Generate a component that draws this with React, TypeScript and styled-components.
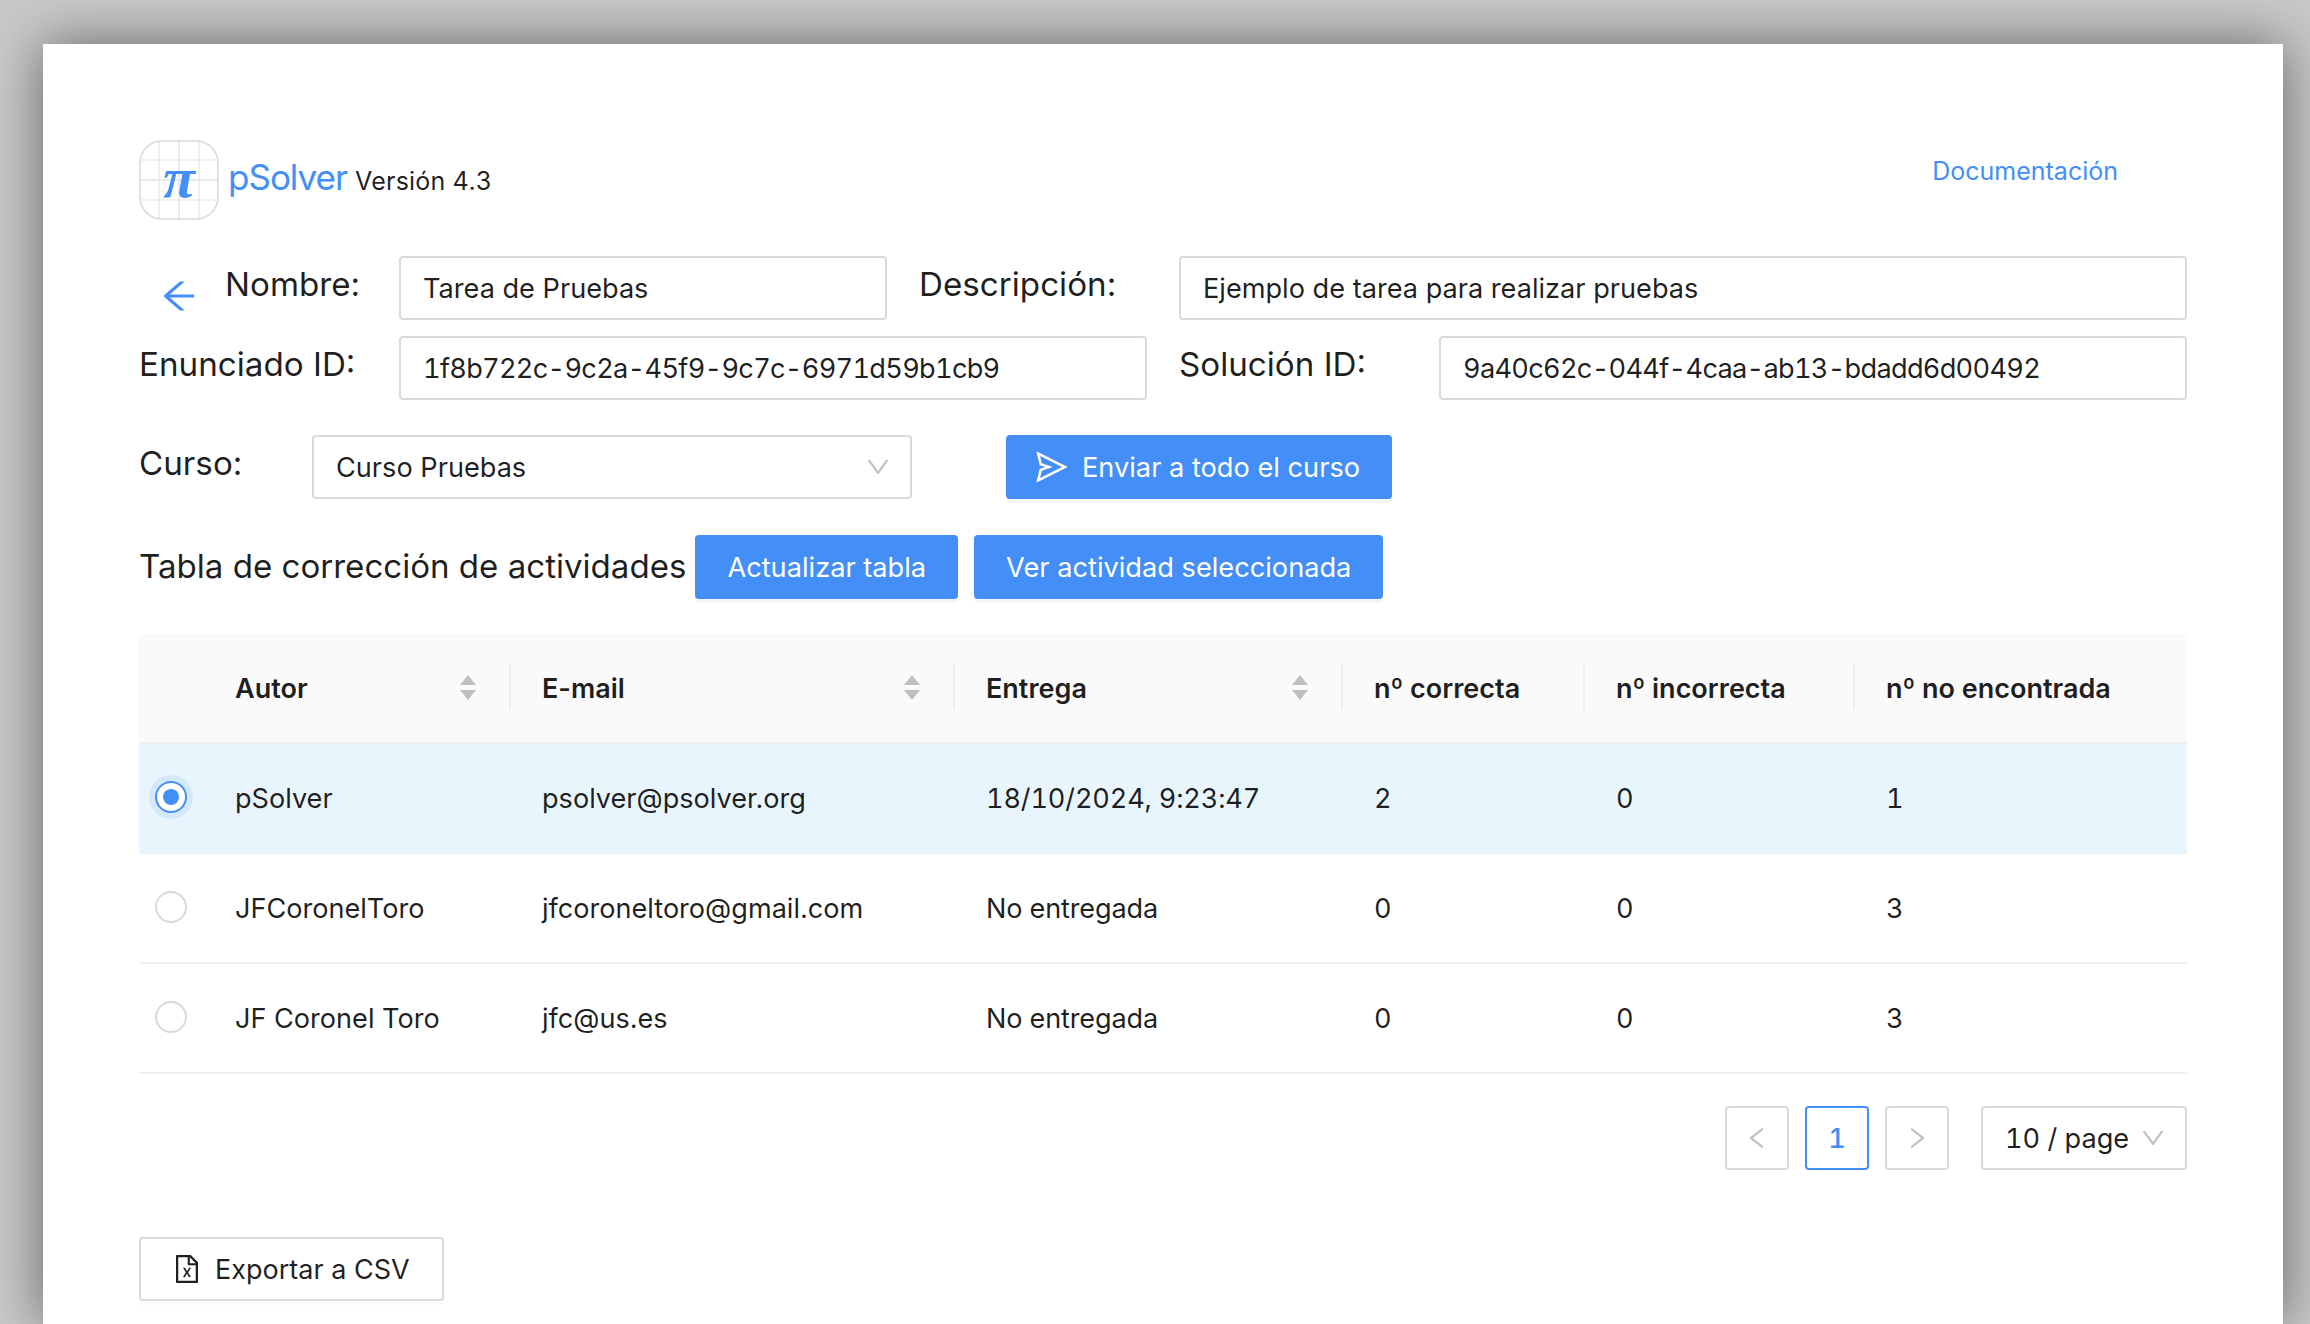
import React from 'react'
import styled, { createGlobalStyle } from 'styled-components'
import {
	AiOutlineArrowLeft,
	AiOutlineSend,
	AiOutlineDown,
	AiOutlineLeft,
	AiOutlineRight,
	AiOutlineFileExcel,
} from 'react-icons/ai'

const BLUE = '#448ef7'
const BORDER = '#d9d9d9'
const TEXT = 'rgba(0, 0, 0, 0.88)'
const FONT = 'Inter, "Liberation Sans", sans-serif'

const GlobalStyle = createGlobalStyle`
	html, body {
		margin: 0;
		height: 100%;
		overflow: hidden;
		background: #c9c9c9;
	}
	* {
		box-sizing: border-box;
	}
	body {
		font-family: ${FONT};
		color: ${TEXT};
	}
`

const Page = styled.div`
	height: 1324px;
	padding: 44px 27px 0 43px;
	background: #c9c9c9;
`

const Window = styled.main`
	height: 1280px;
	background: #fff;
	padding: 96px 96px 0 96px;
	box-shadow: 0 0 52px rgba(0, 0, 0, 0.5);
	display: flex;
	flex-direction: column;
`

const Header = styled.header`
	display: flex;
	align-items: center;
	height: 80px;
	margin-bottom: 36px;
`

const LogoMark = styled.svg`
	width: 80px;
	height: 80px;
	flex: none;
`

const Title = styled.div`
	display: flex;
	align-items: baseline;
	margin-left: 9px;
	margin-top: -5px;
`

const Brand = styled.span`
	font-size: 35px;
	line-height: 1;
	color: ${BLUE};
	letter-spacing: -1px;
`

const Version = styled.span`
	margin-left: 8px;
	font-size: 25px;
	letter-spacing: 0.2px;
	font-feature-settings: "tnum";
`

const DocLink = styled.a`
	margin-left: auto;
	margin-right: 69px;
	margin-top: -18px;
	font-size: 25px;
	color: ${BLUE};
`

const FieldRow = styled.div<{ $gap?: number }>`
	display: flex;
	align-items: stretch;
	margin-bottom: ${p => p.$gap ?? 16}px;
`

const LabelSlot = styled.div<{ $width: number; $inset?: number }>`
	display: flex;
	align-items: center;
	width: ${p => p.$width}px;
	padding-left: ${p => p.$inset ?? 0}px;
	flex: none;
`

const BackArrow = styled(AiOutlineArrowLeft)`
	width: 42px;
	height: 42px;
	margin-left: 19px;
	margin-right: 25px;
	margin-top: 16px;
	color: ${BLUE};
`

const Label = styled.label`
	font-size: 33.2px;
	line-height: 1;
	margin-top: -6px;
`

const Field = styled.input<{ $width?: number; $code?: boolean }>`
	height: 64px;
	${p => (p.$width ? `width: ${p.$width}px; flex: none;` : 'flex: 1; min-width: 0;')}
	border: 2px solid ${BORDER};
	border-radius: 4px;
	padding: 0 22px;
	font: 27.15px ${FONT};
	font-feature-settings: ${p => (p.$code ? '"tnum"' : 'normal')};
	letter-spacing: ${p => (p.$code ? '-0.7px' : '0')};
	color: ${TEXT};
	outline: none;
`

const SelectBox = styled.div<{ $width: number }>`
	display: flex;
	align-items: center;
	justify-content: space-between;
	width: ${p => p.$width}px;
	height: 64px;
	flex: none;
	border: 2px solid ${BORDER};
	border-radius: 4px;
	padding: 0 18px 0 22px;
	font-size: 27.15px;
`

const Chevron = styled(AiOutlineDown)`
	width: 28px;
	height: 28px;
	color: #bfbfbf;
`

const PrimaryButton = styled.button<{ $left?: number }>`
	display: inline-flex;
	align-items: center;
	justify-content: center;
	gap: 16px;
	height: 64px;
	flex: none;
	margin-left: ${p => p.$left ?? 0}px;
	padding: 0 32px;
	border: none;
	border-radius: 4px;
	background: ${BLUE};
	color: #fff;
	font: 27.2px ${FONT};
	box-shadow: 0 4px 0 rgba(0, 0, 0, 0.04);

	svg {
		width: 36px;
		height: 36px;
		margin: 0 -4px;
	}
`

const SectionTitle = styled.h2`
	margin: -3px 0 0;
	align-self: center;
	font-size: 33.1px;
	font-weight: 400;
`

const Table = styled.table`
	width: 100%;
	table-layout: fixed;
	border-collapse: separate;
	border-spacing: 0;
	font-size: 27.1px;
`

const Th = styled.th<{ $sep?: boolean }>`
	position: relative;
	height: 110px;
	padding: 0 32px;
	text-align: left;
	font-weight: 600;
	font-size: 27px;
	background: #fafafa;
	border-bottom: 2px solid #f0f0f0;

	&::before {
		content: ${p => (p.$sep ? "''" : 'none')};
		position: absolute;
		left: -1px;
		top: 31px;
		height: 45px;
		width: 2px;
		background: #eeeeee;
	}
`

const SortIcons = styled.svg`
	position: absolute;
	right: 34px;
	top: 41px;
	width: 16px;
	height: 25px;
	fill: #bfbfbf;
`

const Tr = styled.tr<{ $selected?: boolean }>`
	background: ${p => (p.$selected ? '#e8f5fd' : '#fff')};

	td {
		border-bottom: 2px solid ${p => (p.$selected ? '#e8f5fd' : '#f0f0f0')};
	}
`

const Td = styled.td<{ $nums?: boolean }>`
	height: 110px;
	padding: 0 32px;
	font-feature-settings: ${p => (p.$nums ? '"tnum"' : 'normal')};
	letter-spacing: ${p => (p.$nums ? '-0.15px' : '0')};
`

const RadioCell = styled.td`
	height: 110px;
	padding: 0 0 0 16px;
`

const Radio = styled.span<{ $checked?: boolean }>`
	display: block;
	position: relative;
	top: -1px;
	width: 32px;
	height: 32px;
	border-radius: 50%;
	background: #fff;
	border: 2px solid ${p => (p.$checked ? BLUE : BORDER)};
	box-shadow: ${p => (p.$checked ? '0 0 0 6px #d3e8fd' : 'none')};

	&::after {
		content: ${p => (p.$checked ? "''" : 'none')};
		position: absolute;
		inset: 6px;
		border-radius: 50%;
		background: ${BLUE};
	}
`

const Pagination = styled.nav`
	display: flex;
	justify-content: flex-end;
	gap: 16px;
	margin-top: 32px;
`

const PageButton = styled.button<{ $active?: boolean }>`
	display: flex;
	align-items: center;
	justify-content: center;
	width: 64px;
	height: 64px;
	padding: 0;
	background: #fff;
	border: 2px solid ${p => (p.$active ? BLUE : BORDER)};
	border-radius: 4px;
	color: ${p => (p.$active ? BLUE : '#bfbfbf')};
	font: 500 27px ${FONT};
	font-feature-settings: "tnum";

	svg {
		width: 28px;
		height: 28px;
	}
`

const PageSize = styled(SelectBox)`
	margin-left: 16px;
	padding: 0 18px 0 22px;
	font-feature-settings: "tnum";
`

const ExportButton = styled.button`
	display: inline-flex;
	align-items: center;
	gap: 15px;
	align-self: flex-start;
	height: 64px;
	margin-top: 67px;
	padding: 0 32px;
	background: #fff;
	border: 2px solid ${BORDER};
	border-radius: 4px;
	color: ${TEXT};
	font: 27px ${FONT};
	box-shadow: 0 4px 0 rgba(0, 0, 0, 0.02);

	svg {
		width: 32px;
		height: 32px;
		margin: 0 -2.5px;
	}
`

const columns = [64, 307, 444, 388, 242, 270, 333]

const rows = [
	{ autor: 'pSolver', email: 'psolver@psolver.org', entrega: '18/10/2024, 9:23:47', ok: 2, bad: 0, missing: 1 },
	{ autor: 'JFCoronelToro', email: 'jfcoroneltoro@gmail.com', entrega: 'No entregada', ok: 0, bad: 0, missing: 3 },
	{ autor: 'JF Coronel Toro', email: 'jfc@us.es', entrega: 'No entregada', ok: 0, bad: 0, missing: 3 },
]

const Sort = () => (
	<SortIcons viewBox="0 0 16 25">
		<path d="M8 0L16 10H0Z" />
		<path d="M0 15H16L8 25Z" />
	</SortIcons>
)

const Logo = () => (
	<LogoMark viewBox="0 0 80 80">
		<g stroke="#f0f0f0" strokeWidth="2">
			<path d="M20 1V79M60 1V79M1 20H79M1 60H79" />
		</g>
		<g stroke="#e4e4e4" strokeWidth="1.5">
			<path d="M40 1V79M1 40H79" />
		</g>
		<rect x="1" y="1" width="78" height="78" rx="22" fill="none" stroke="#d9d9d9" strokeWidth="1.5" />
		<text x="40" y="57" textAnchor="middle" fontFamily="'Liberation Serif', serif" fontStyle="italic" fontWeight="700" fontSize="58" fill={BLUE}>
			π
		</text>
	</LogoMark>
)

export default function App() {
	return (
		<>
			<GlobalStyle />
			<Page>
				<Window>
					<Header>
						<Logo />
						<Title>
							<Brand>pSolver</Brand>
							<Version>Versión 4.3</Version>
						</Title>
						<DocLink>Documentación</DocLink>
					</Header>

					<FieldRow>
						<LabelSlot $width={260}>
							<BackArrow />
							<Label>Nombre:</Label>
						</LabelSlot>
						<Field $width={488} readOnly value="Tarea de Pruebas" />
						<LabelSlot $width={292} $inset={32}>
							<Label>Descripción:</Label>
						</LabelSlot>
						<Field readOnly value="Ejemplo de tarea para realizar pruebas" />
					</FieldRow>

					<FieldRow $gap={35}>
						<LabelSlot $width={260}>
							<Label>Enunciado ID:</Label>
						</LabelSlot>
						<Field $width={748} $code readOnly value="1f8b722c-9c2a-45f9-9c7c-6971d59b1cb9" />
						<LabelSlot $width={292} $inset={32}>
							<Label>Solución ID:</Label>
						</LabelSlot>
						<Field $code readOnly value="9a40c62c-044f-4caa-ab13-bdadd6d00492" />
					</FieldRow>

					<FieldRow $gap={36}>
						<LabelSlot $width={173}>
							<Label>Curso:</Label>
						</LabelSlot>
						<SelectBox $width={600}>
							Curso Pruebas
							<Chevron />
						</SelectBox>
						<PrimaryButton $left={94}>
							<AiOutlineSend />
							Enviar a todo el curso
						</PrimaryButton>
					</FieldRow>

					<FieldRow $gap={35}>
						<SectionTitle>Tabla de corrección de actividades</SectionTitle>
						<PrimaryButton $left={9}>Actualizar tabla</PrimaryButton>
						<PrimaryButton $left={16}>Ver actividad seleccionada</PrimaryButton>
					</FieldRow>

					<Table>
						<colgroup>
							{columns.map((w, i) => (
								<col key={i} style={{ width: w }} />
							))}
						</colgroup>
						<thead>
							<tr>
								<Th />
								<Th>Autor<Sort /></Th>
								<Th $sep>E-mail<Sort /></Th>
								<Th $sep>Entrega<Sort /></Th>
								<Th $sep>nº correcta</Th>
								<Th $sep>nº incorrecta</Th>
								<Th $sep>nº no encontrada</Th>
							</tr>
						</thead>
						<tbody>
							{rows.map((r, i) => (
								<Tr key={r.email} $selected={i === 0}>
									<RadioCell><Radio $checked={i === 0} /></RadioCell>
									<Td>{r.autor}</Td>
									<Td>{r.email}</Td>
									<Td $nums>{r.entrega}</Td>
									<Td $nums>{r.ok}</Td>
									<Td $nums>{r.bad}</Td>
									<Td $nums>{r.missing}</Td>
								</Tr>
							))}
						</tbody>
					</Table>

					<Pagination>
						<PageButton><AiOutlineLeft /></PageButton>
						<PageButton $active>1</PageButton>
						<PageButton><AiOutlineRight /></PageButton>
						<PageSize $width={206}>
							10 / page
							<Chevron />
						</PageSize>
					</Pagination>

					<ExportButton>
						<AiOutlineFileExcel />
						Exportar a CSV
					</ExportButton>
				</Window>
			</Page>
		</>
	)
}
